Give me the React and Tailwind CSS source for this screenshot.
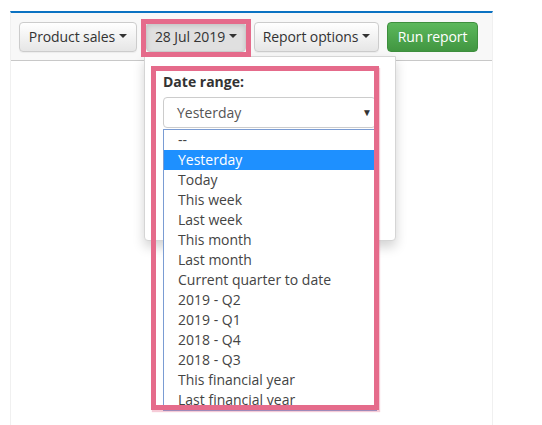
import React from "react";

const OPTIONS = [
  "--",
  "Yesterday",
  "Today",
  "This week",
  "Last week",
  "This month",
  "Last month",
  "Current quarter to date",
  "2019 - Q2",
  "2019 - Q1",
  "2018 - Q4",
  "2018 - Q3",
  "This financial year",
  "Last financial year",
];

function Caret() {
  return (
    <span className="ml-[4px] inline-block h-0 w-0 border-x-[4px] border-t-[4px] border-x-transparent border-t-[#333] align-middle" />
  );
}

function Btn({ children, active, width }) {
  return (
    <button
      className={`flex h-[30px] shrink-0 items-center justify-center whitespace-nowrap rounded-[4px] border border-[#ccc] pb-[2px] text-[14px] tracking-[-0.1px] text-[#333] ${width} ${
        active
          ? "bg-[#e0e0e0] shadow-[inset_0_3px_5px_rgba(0,0,0,0.125)]"
          : "bg-gradient-to-b from-white to-[#e6e6e6] shadow-[0_1px_1px_rgba(0,0,0,0.05)]"
      }`}
    >
      {children}
    </button>
  );
}

export default function App() {
  return (
    <div className="relative h-[425px] w-[542px] overflow-hidden bg-white font-['Open_Sans',sans-serif]">
      <div className="ml-[10px] mt-[11px] flex h-[414px] w-[483px] flex-col border-x border-x-[#f0f0f0] border-t-2 border-t-[#0b72c2]">
        <div className="flex h-[48px] items-start gap-[8px] border-b border-[#c8c8c8] bg-[#f8f8f8] pl-[8px] pt-[9px]">
          <Btn width="w-[118px]">
            Product sales
            <Caret />
          </Btn>
          <div className="ml-[1px] shrink-0">
            <Btn active width="w-[100px]">
              28 Jul 2019
              <Caret />
            </Btn>
          </div>
          <Btn width="w-[125px]">
            Report options
            <Caret />
          </Btn>
          <button className="flex h-[30px] w-[91px] shrink-0 items-center justify-center whitespace-nowrap rounded-[4px] border border-[#3e8f3e] bg-gradient-to-b from-[#5cb85c] to-[#419641] pb-[2px] text-[14px] tracking-[-0.1px] text-white">
            Run report
          </button>
        </div>
        <div className="flex-1 bg-white" />
      </div>

      {/* dropdown menu */}
      <div className="absolute left-[144px] top-[56px] h-[185px] w-[252px] rounded-b-[4px] border border-[#d5d5d5] bg-white shadow-[0_6px_12px_rgba(0,0,0,0.175)]">
        <div className="pl-[18px] pt-[15px]">
          <div className="text-[14px] font-bold leading-[20px] text-[#333]">Date range:</div>
          <div className="mt-[5px] flex h-[31px] w-[213px] items-center justify-between rounded-[4px] border border-[#ccc] pb-[1px] pl-[13px] pr-[3px] text-[14px] text-[#555]">
            <span>Yesterday</span>
            <span className="text-[10px] text-[#333]">▼</span>
          </div>
        </div>
      </div>

      {/* native select listbox */}
      <div className="absolute left-[163px] top-[129px] h-[282px] w-[214px] overflow-hidden border border-[#7a9cd3] bg-white text-[14px] text-[#444]">
        {OPTIONS.map((o, i) => (
          <div
            key={o}
            className={`h-[20px] pl-[14px] leading-[20px] ${i === 1 ? "bg-[#1e90ff] text-white" : ""}`}
          >
            {o}
          </div>
        ))}
      </div>

      {/* annotation boxes */}
      <div className="pointer-events-none absolute left-[141px] top-[19px] h-[38px] w-[110px] border-[5px] border-[#e56b8b]" />
      <div className="pointer-events-none absolute left-[151px] top-[66px] h-[344px] w-[228px] border-[5px] border-[#e56b8b] shadow-[1px_2px_1px_rgba(229,107,139,0.35)]" />
    </div>
  );
}
